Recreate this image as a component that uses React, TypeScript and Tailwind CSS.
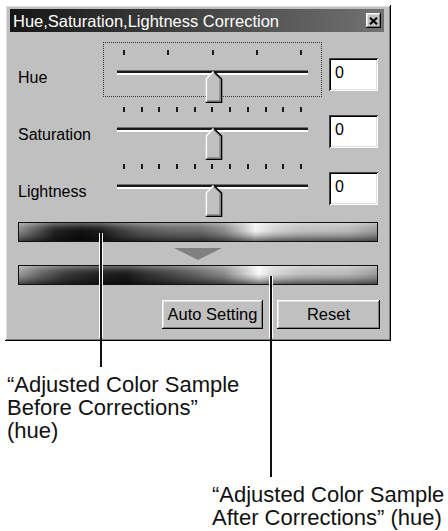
import React from "react";

const raised =
  "shadow-[inset_-1px_-1px_#000,inset_1px_1px_#fff,inset_-2px_-2px_#808080,inset_2px_2px_#dfdfdf]";
const sunken =
  "shadow-[inset_1px_1px_#404040,inset_-1px_-1px_#fff,inset_2px_2px_#000,inset_-2px_-2px_#dfdfdf]";

const Thumb = () => (
  <svg width="18" height="33" viewBox="0 0 18 33" className="absolute left-[101px] top-0">
    <path d="M1 32 V8.5 L8.5 1 L16 8.5 V32 Z" fill="#c0c0c0" />
    <path d="M8.7 2.6 L15 8.9 V31 H2" stroke="#808080" strokeWidth="1.3" fill="none" />
    <path d="M8.5 1 L16.6 9.1 V32.4 H0.8" stroke="#000" strokeWidth="1.4" fill="none" />
    <path d="M1.4 31.6 V8.7 L8.5 1.6" stroke="#fff" strokeWidth="1.4" fill="none" />
  </svg>
);

const SliderRow = ({ label, ticks, focused }: { label: string; ticks: number; focused?: boolean }) => (
  <div className="flex h-[57px]">
    <div className="w-[85px] mt-[27px] text-[16px] leading-[18px] text-black">{label}</div>
    <div
      className={`w-[219px] h-[55px] border ${focused ? "border-dotted border-[#333]" : "border-transparent"}`}
    >
      <div className="ml-[19px] mt-[7px] w-[179px] h-[5px] flex justify-between">
        {Array.from({ length: ticks }).map((_, i) => (
          <div key={i} className="w-[2px] h-[5px] bg-[#1a1a1a]" />
        ))}
      </div>
      <div className="relative mt-[2px] h-[33px]">
        <div className="ml-[13px] mt-[15px] w-[191px] h-[5px] bg-[linear-gradient(to_bottom,#707070_0,#707070_1px,#1a1a1a_1px,#1a1a1a_3px,#fff_3px,#fff_5px)]" />
        <Thumb />
      </div>
    </div>
    <div className={`ml-[7px] mt-[16px] w-[49px] h-[33px] bg-white ${sunken} pl-[6px] pt-[6px] text-[16px] leading-[18px]`}>
      0
    </div>
  </div>
);

const ColorBar = ({ variant }: { variant: "before" | "after" }) => (
  <div
    className={`w-[360px] h-[20px] border-[1.5px] border-[#111] ${
      variant === "before"
        ? "bg-[linear-gradient(to_right,#8a8a8a_0%,#555_5%,#222_10%,#111_17%,#1a1a1a_23%,#3a3a3a_28%,#555_34%,#666_42%,#6a6a6a_51%,#888_57%,#c8c8c8_63%,#f2f2f2_66%,#d4d4d4_71%,#c0c0c0_78%,#b8b8b8_92%,#999_100%)]"
        : "bg-[linear-gradient(to_right,#9a9a9a_0%,#666_6%,#3a3a3a_13%,#222_22%,#1a1a1a_30%,#333_36%,#4a4a4a_43%,#666_50%,#888_57%,#c8c8c8_63%,#fafafa_67%,#d8d8d8_71%,#c0c0c0_78%,#b8b8b8_92%,#999_100%)]"
    }`}
  >
    <div className="w-full h-full bg-[linear-gradient(to_bottom,rgba(255,255,255,0.35)_0%,rgba(255,255,255,0.1)_25%,rgba(0,0,0,0)_45%,rgba(0,0,0,0.2)_70%,rgba(0,0,0,0.55)_100%)]" />
  </div>
);

const Window = () => (
  <div className={`w-[386px] h-[336px] bg-[#c0c0c0] ${raised} pt-[4px] pl-[5px] pr-[7px] flex flex-col`}>
    <div className="h-[23px] flex items-center justify-between bg-[linear-gradient(to_right,#161616,#727272)] pl-[3px] pr-[3px]">
      <span className="text-white text-[16.5px] leading-[20px]">Hue,Saturation,Lightness Correction</span>
      <div className={`w-[15px] h-[15px] bg-[#c0c0c0] ${raised} flex items-center justify-center`}>
        <svg width="9" height="8" viewBox="0 0 9 8">
          <path d="M1 0.8 L8 7.2 M8 0.8 L1 7.2" stroke="#000" strokeWidth="2" />
        </svg>
      </div>
    </div>
    <div className="pl-[8px] mt-[10px] flex flex-col">
      <SliderRow label="Hue" ticks={5} focused />
      <SliderRow label="Saturation" ticks={11} />
      <SliderRow label="Lightness" ticks={11} />
      <div className="mt-[9px]">
        <ColorBar variant="before" />
      </div>
      <div className="mt-[6px] ml-[156px] w-0 h-0 border-l-[24px] border-r-[24px] border-t-[12px] border-l-transparent border-r-transparent border-t-[#808080]" />
      <div className="mt-[5px]">
        <ColorBar variant="after" />
      </div>
      <div className="mt-[15px] flex gap-[14px] ml-[144px]">
        <button className={`w-[101px] h-[29px] ${raised} text-[16.5px] text-black`}>Auto Setting</button>
        <button className={`w-[103px] h-[29px] ${raised} text-[16.5px] text-black`}>Reset</button>
      </div>
    </div>
  </div>
);

export default function App() {
  return (
    <div className="relative w-[448px] h-[531px] overflow-hidden bg-white font-['Liberation_Sans',Arial,sans-serif]">
      <div className="pt-[5px] pl-[5px]">
        <Window />
      </div>
      <div className="mt-[32px] pl-[7px] text-[22px] leading-[23px] text-[#111]">
        <div>“Adjusted Color Sample</div>
        <div>Before Corrections”</div>
        <div>(hue)</div>
      </div>
      <div className="mt-[41px] pl-[212px] text-[22px] leading-[23px] text-[#111]">
        <div>“Adjusted Color Sample</div>
        <div>After Corrections” (hue)</div>
      </div>

      {/* callout lines */}
      <div className="absolute left-[99px] top-[233px] w-[4px] h-[105px] bg-white" />
      <div className="absolute left-[100px] top-[233px] w-[2px] h-[134px] bg-[#111]" />
      <div className="absolute left-[269px] top-[276px] w-[4px] h-[62px] bg-white" />
      <div className="absolute left-[270px] top-[276px] w-[2px] h-[201px] bg-[#111]" />
    </div>
  );
}
